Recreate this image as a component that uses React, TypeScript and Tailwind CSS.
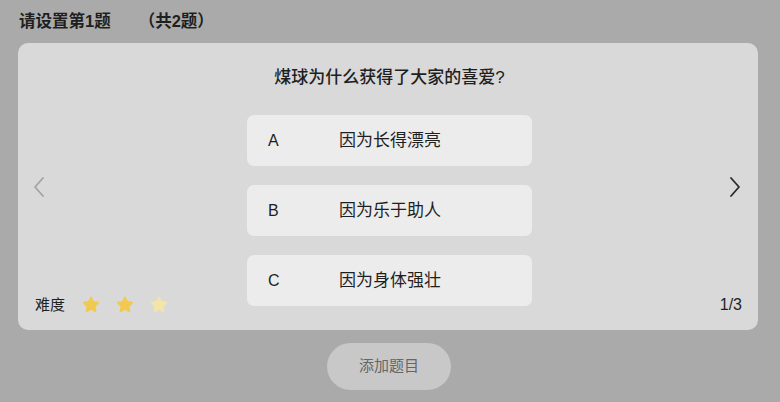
import React from "react";

const FONT = { fontFamily: '"Liberation Sans", "Noto Sans CJK SC", sans-serif' };

function Star({ color }: { color: string }) {
  return (
    <svg width="20" height="20" viewBox="0 0 24 24">
      <path
        d="M12 3.2l2.6 5.3 5.8.8-4.2 4.1 1 5.8L12 16.5l-5.2 2.7 1-5.8-4.2-4.1 5.8-.8z"
        fill={color}
        stroke={color}
        strokeWidth="2.4"
        strokeLinejoin="round"
      />
    </svg>
  );
}

function Chevron({ dir, color }: { dir: "left" | "right"; color: string }) {
  return (
    <svg width="14" height="22" viewBox="0 0 14 22">
      <path
        d={dir === "left" ? "M11 2L3 11l8 9" : "M3 2l8 9-8 9"}
        fill="none"
        stroke={color}
        strokeWidth="1.8"
        strokeLinecap="round"
        strokeLinejoin="round"
      />
    </svg>
  );
}

const options = [
  { k: "A", t: "因为长得漂亮" },
  { k: "B", t: "因为乐于助人" },
  { k: "C", t: "因为身体强壮" },
];

export default function App() {
  return (
    <div className="w-[780px] h-[402px] bg-[#aaaaaa] overflow-hidden text-[#1f1f1f]" style={FONT}>
      <div className="h-[43px] flex items-center pl-[19px] text-[16.5px] font-semibold">
        <span>请设置第1题</span>
        <span className="ml-[28px]">（共2题）</span>
      </div>
      <div className="ml-[18px] w-[740px] h-[287px] rounded-[10px] bg-[#d9d9d9] flex">
        <div className="w-[229px] grid grid-rows-[1fr_auto_1fr] pl-[14px]">
          <div />
          <div className="flex items-center h-[22px]">
            <Chevron dir="left" color="#a3a3a3" />
          </div>
          <div className="flex items-end pb-[15px]">
            <div className="flex items-center h-[20px] pl-[3px]">
              <span className="text-[15px]">难度</span>
              <div className="ml-[16px] flex items-center gap-[14px]">
                <Star color="#f1c94f" />
                <Star color="#f1c94f" />
                <Star color="#f5e4a8" />
              </div>
            </div>
          </div>
        </div>
        <div className="w-[285px] flex flex-col items-center">
          <div className="mt-[23px] h-[24px] leading-[24px] text-[17px] font-medium whitespace-nowrap">
            煤球为什么获得了大家的喜爱?
          </div>
          <div className="mt-[25px] w-full flex flex-col gap-[19px]">
            {options.map((o) => (
              <div
                key={o.k}
                className="h-[51px] rounded-[7px] bg-[#ececec] flex items-center text-[17px]"
              >
                <span className="w-[92px] pl-[21px] text-[16px]">{o.k}</span>
                <span>{o.t}</span>
              </div>
            ))}
          </div>
        </div>
        <div className="flex-1 grid grid-rows-[1fr_auto_1fr] pr-[16px]">
          <div />
          <div className="flex items-center justify-end h-[22px]">
            <Chevron dir="right" color="#2a2a2a" />
          </div>
          <div className="flex items-end justify-end pb-[15px]">
            <span className="text-[16px] h-[20px] leading-[20px]">1/3</span>
          </div>
        </div>
      </div>
      <div className="flex justify-center mt-[13px] pr-[2px]">
        <div className="w-[124px] h-[47px] rounded-full bg-[#c8c8c8] flex items-center justify-center text-[15px] text-[#666666]">
          添加题目
        </div>
      </div>
    </div>
  );
}
